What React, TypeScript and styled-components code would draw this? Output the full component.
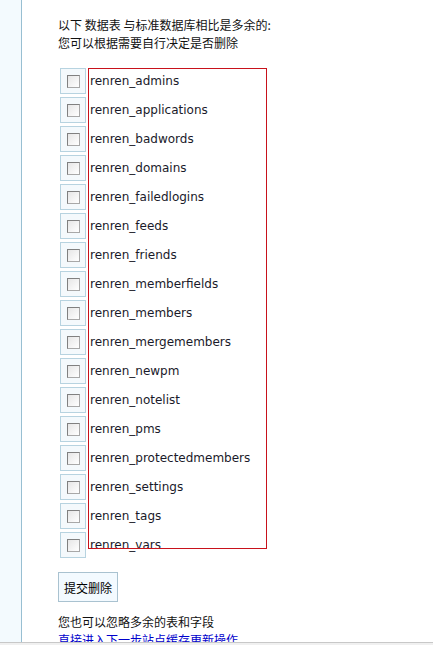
import styled, { createGlobalStyle } from "styled-components"

const tables = [
  "renren_admins",
  "renren_applications",
  "renren_badwords",
  "renren_domains",
  "renren_failedlogins",
  "renren_feeds",
  "renren_friends",
  "renren_memberfields",
  "renren_members",
  "renren_mergemembers",
  "renren_newpm",
  "renren_notelist",
  "renren_pms",
  "renren_protectedmembers",
  "renren_settings",
  "renren_tags",
  "renren_vars",
]

const GlobalStyle = createGlobalStyle`
  html, body {
    margin: 0;
    padding: 0;
    background: #fff;
  }
  body {
    font-family: "DejaVu Sans", Verdana, "Noto Sans CJK SC", sans-serif;
    font-size: 12px;
    color: #000;
  }
`

const App = () => {
  return (
    <>
      <GlobalStyle />
      <Page>
        <Frame>
          <Sidebar />
          <Content>
            <Intro>
              以下 数据表 与标准数据库相比是多余的:
              <br />
              您可以根据需要自行决定是否删除
            </Intro>
            <ListWrap>
              <TableList>
                {tables.map((name) => (
                  <Row key={name}>
                    <CheckCell>
                      <Check type="checkbox" name="droptable" value={name} />
                    </CheckCell>
                    <NameCell>{name}</NameCell>
                  </Row>
                ))}
              </TableList>
              <Highlight />
            </ListWrap>
            <SubmitBtn type="button">提交删除</SubmitBtn>
            <Note>
              您也可以忽略多余的表和字段
              <br />
              <NextLink href="#">直接进入下一步站点缓存更新操作</NextLink>
            </Note>
          </Content>
        </Frame>
        <BottomBar />
      </Page>
    </>
  )
}

const Page = styled.div`
  height: 645px;
  display: flex;
  flex-direction: column;
  overflow: hidden;
`

const Frame = styled.div`
  height: 642px;
  flex: none;
  display: flex;
  overflow: hidden;
`

const Sidebar = styled.div`
  width: 21px;
  flex: none;
  background: #f3fafe;
  border-right: 1px solid #98bfd2;
`

const Content = styled.div`
  flex: 1;
  padding: 16px 0 0 36px;
`

const Intro = styled.p`
  margin: 0;
  line-height: 18px;
  font-family: "Noto Sans CJK SC", sans-serif;
  color: #111;
`

const ListWrap = styled.div`
  position: relative;
  margin: 16px 0 14px 2px;
  width: 220px;
`

const TableList = styled.div`
  display: flex;
  flex-direction: column;
  gap: 3px;
`

const Row = styled.div`
  display: flex;
  align-items: center;
  height: 26px;
`

const CheckCell = styled.div`
  width: 24px;
  height: 24px;
  border: 1px solid #b7d3e0;
  background: #f4f9fc;
  display: flex;
  align-items: center;
  justify-content: center;
  flex: none;
`

const Check = styled.input`
  appearance: none;
  margin: 0;
  width: 13px;
  height: 13px;
  border: 1px solid #a8a8a8;
  border-top-color: #808080;
  border-left-color: #808080;
  background: linear-gradient(135deg, #e6e6e6, #ffffff);
  box-sizing: border-box;
`

const NameCell = styled.div`
  padding-left: 4px;
  color: #1a1a2a;
  white-space: nowrap;
`

const Highlight = styled.div`
  position: absolute;
  left: 28px;
  top: 0;
  width: 177px;
  height: 479px;
  border: 1px solid #c8121b;
  pointer-events: none;
`

const SubmitBtn = styled.button`
  display: block;
  width: 60px;
  height: 30px;
  padding: 0;
  border: 1px solid #a9c2d0;
  background: #f3faff;
  font-family: "Noto Sans CJK SC", sans-serif;
  font-size: 12px;
  color: #000;
`

const Note = styled.p`
  margin: 11px 0 0;
  line-height: 18px;
  font-family: "Noto Sans CJK SC", sans-serif;
  color: #111;
`

const NextLink = styled.a`
  color: #0000cc;
  text-decoration: none;
`

const BottomBar = styled.div`
  flex: 1;
  border-top: 1px solid #c8c8c8;
  background: #f0f0f0;
`

export default App
